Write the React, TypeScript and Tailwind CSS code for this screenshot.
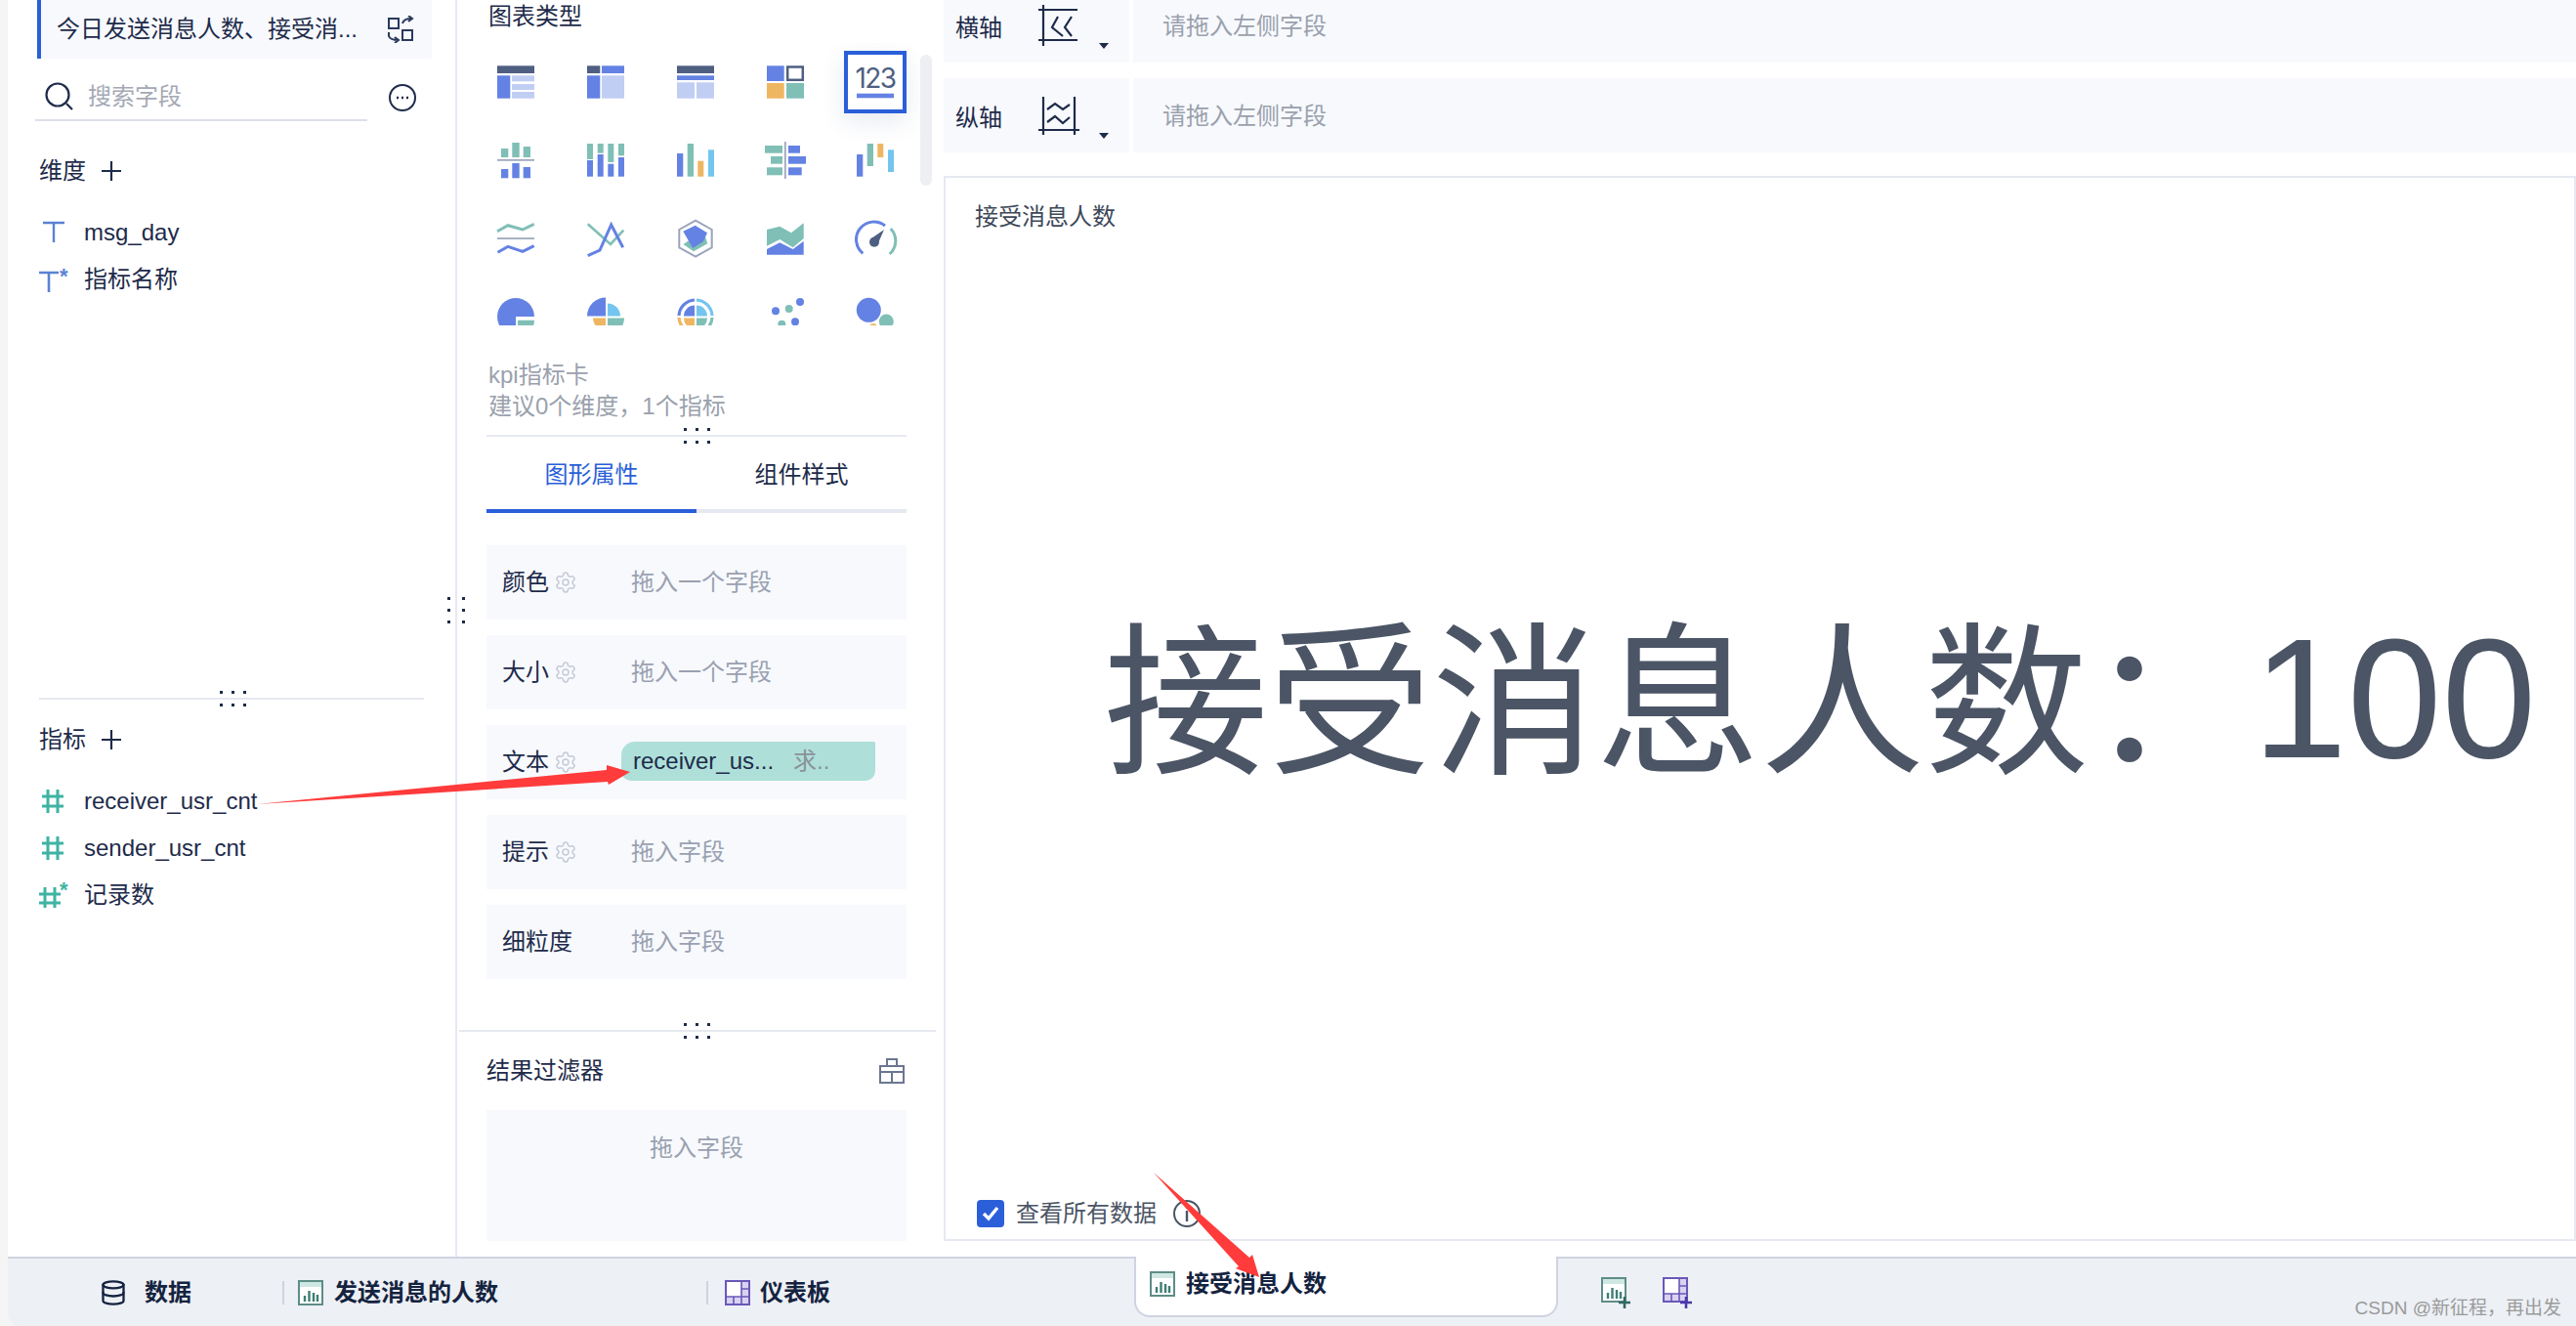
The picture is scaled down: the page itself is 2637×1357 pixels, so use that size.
import { Database, Settings } from "lucide-react";
import type { ReactNode } from "react";

const BLUE = "#6482e3";
const LIGHT = "#c1cef4";
const DARK = "#4f5f82";
const TEAL = "#7fbfb6";
const ORANGE = "#efb661";
const SKY = "#73c5ef";
const GRAY = "#9aa4ba";

// [x1, x2, y1, y2, fill]
type Box = [number, number, number, number, string];

const Bars = ({ list }: { list: Box[] }) => (
  <>
    {list.map(([x1, x2, y1, y2, c], i) => (
      <rect key={i} x={x1} y={y1} width={x2 - x1} height={y2 - y1} fill={c} />
    ))}
  </>
);

// quarter sectors: 0 upper left, 1 upper right, 2 lower right, 3 lower left
const sector = (cx: number, cy: number, r: number, a: number) => {
  const p = [
    [cx, cy - r, cx - r, cy],
    [cx + r, cy, cx, cy - r],
    [cx, cy + r, cx + r, cy],
    [cx - r, cy, cx, cy + r],
  ][a];
  return `M${cx} ${cy}L${p[2]} ${p[3]}A${r} ${r} 0 0 1 ${p[0]} ${p[1]}Z`;
};

const chartIcons: ReactNode[] = [
  <Bars list={[[1, 39, 3.3, 11, DARK], [1, 14.3, 13.3, 36.7, BLUE], [16, 39, 13.3, 19.3, LIGHT], [16, 39, 22, 28, LIGHT], [16, 39, 30, 36.7, LIGHT]]} />,
  <Bars list={[[1, 14.3, 3.3, 11, DARK], [16, 39, 3.3, 11, BLUE], [1, 14.3, 13.3, 36.7, BLUE], [16, 39, 13.3, 36.7, LIGHT]]} />,
  <Bars list={[[1, 39, 3.3, 11, DARK], [1, 39, 13.3, 18, BLUE], [1, 19, 20.3, 36.7, LIGHT], [21, 39, 20.3, 36.7, LIGHT]]} />,
  <>
    <Bars list={[[1, 18.7, 3.3, 19, BLUE], [1, 18.7, 21, 36.7, ORANGE], [21, 39, 21, 36.7, TEAL]]} />
    <rect x="22.2" y="4.5" width="15.6" height="13.3" fill="none" stroke={DARK} strokeWidth="2.5" />
  </>,
  <>
    <text x="20" y="26" textAnchor="middle" fontSize="28" fill={DARK} fontFamily="Inter, sans-serif" letterSpacing="-1.5">123</text>
    <rect x="1" y="31.7" width="38" height="4.6" fill={BLUE} />
  </>,
  <Bars list={[[1, 39, 19, 20.7, GRAY], [5, 12.3, 8, 17, TEAL], [16.3, 23.7, 2, 17, TEAL], [27.7, 35, 6, 17, TEAL], [5, 12.3, 29, 38.3, BLUE], [16.3, 23.7, 23, 38.3, BLUE], [27.7, 35, 27, 38.3, BLUE]]} />,
  <Bars list={[[1, 7, 3, 19, TEAL], [1, 7, 20, 36.7, BLUE], [11.7, 17.7, 3, 12.7, TEAL], [11.7, 17.7, 14, 36.7, BLUE], [22.3, 28.3, 3, 22, TEAL], [22.3, 28.3, 23.7, 36.7, BLUE], [33, 39, 3, 15.3, TEAL], [33, 39, 17, 36.7, BLUE]]} />,
  <Bars list={[[1, 7.3, 13, 36.7, BLUE], [11.7, 18, 3, 36.7, TEAL], [22.3, 28.3, 20.7, 36.7, ORANGE], [33, 39, 9.3, 36.7, SKY]]} />,
  <Bars list={[[19, 20.7, 1, 39, GRAY], [-1, 17, 5, 12.7, TEAL], [5, 17, 16, 23.7, TEAL], [1, 17, 27.3, 35.3, TEAL], [23, 35, 5, 12.7, BLUE], [23, 41, 16, 23.7, BLUE], [23, 36.7, 27.3, 35.3, BLUE]]} />,
  <Bars list={[[1, 7.3, 14, 36.7, BLUE], [11.7, 18, 3, 26, TEAL], [22.3, 28.3, 3, 17, ORANGE], [33, 39, 9.3, 32, SKY]]} />,
  <>
    <polyline points="1,12.7 12,6.7 27,11 38.7,5.3" fill="none" stroke={TEAL} strokeWidth="3" />
    <rect x="1" y="19.2" width="38" height="1.7" fill={GRAY} />
    <polyline points="1.5,34.3 12,28.3 27,33.3 38.7,27.7" fill="none" stroke={BLUE} strokeWidth="3" />
  </>,
  <>
    <polyline points="1.7,5.3 25,26 38.3,11.7" fill="none" stroke={TEAL} strokeWidth="2.6" />
    <polyline points="1.7,37.7 14,32 25.7,6 37.7,29.3" fill="none" stroke={BLUE} strokeWidth="3" />
  </>,
  <>
    <polygon points="20,1.7 36.7,11 36.7,29.3 20,38.7 3.3,29.3 3.3,11" fill="none" stroke={GRAY} strokeWidth="2" />
    <polygon points="7.5,26 18,33.3 32.3,25.3 28,12" fill={TEAL} />
    <polygon points="7.3,12.7 19.7,6.7 32,14.3 28,23 17.3,30" fill={BLUE} />
  </>,
  <>
    <polygon points="1,11 14.3,7.7 26,14.3 38.7,4.3 38.7,20 27.7,29.3 14.3,21 1,27.7" fill={TEAL} />
    <polygon points="1,31 14.3,24.3 27.7,31 38.7,22.7 38.7,36.7 1,36.7" fill={BLUE} />
  </>,
  <>
    <path d="M7.3 35.3A18 18 0 0 1 30 7" fill="none" stroke={BLUE} strokeWidth="3" />
    <path d="M35.7 10A18 18 0 0 1 34.7 36" fill="none" stroke={TEAL} strokeWidth="3" />
    <circle cx="19" cy="23.7" r="5" fill={DARK} />
    <polygon points="16,20 29,11 22,27" fill={DARK} />
  </>,
  <>
    <circle cx="20" cy="20" r="19" fill={BLUE} />
    <rect x="20" y="20" width="20" height="20" fill="#fff" />
    <path d={sector(22, 23.7, 17, 2)} fill={TEAL} />
  </>,
  <>
    <path d={sector(20, 19.5, 19, 0)} fill={BLUE} />
    <path d={sector(22, 19.5, 13, 1)} fill={SKY} />
    <path d={sector(20, 21.5, 13, 3)} fill={ORANGE} />
    <path d={sector(22, 21.5, 17, 2)} fill={TEAL} />
  </>,
  <>
    <path d="M3 19A17 17 0 0 1 19 3" fill="none" stroke={BLUE} strokeWidth="3.2" />
    <path d="M21 3A17 17 0 0 1 37 19" fill="none" stroke={SKY} strokeWidth="3.2" />
    <path d="M19 37A17 17 0 0 1 3 21" fill="none" stroke={ORANGE} strokeWidth="3.2" />
    <path d="M37 21A17 17 0 0 1 21 37" fill="none" stroke={TEAL} strokeWidth="3.2" />
    <path d={sector(19, 19.5, 11, 0)} fill={BLUE} />
    <path d={sector(21, 19.5, 11, 1)} fill={SKY} />
    <path d={sector(19, 21.5, 11, 3)} fill={ORANGE} />
    <path d={sector(21, 21.5, 11, 2)} fill={TEAL} />
  </>,
  <>
    <circle cx="10" cy="14.3" r="4" fill={BLUE} />
    <circle cx="23.7" cy="12" r="4" fill={TEAL} />
    <circle cx="35" cy="5" r="4" fill={BLUE} />
    <circle cx="30" cy="25.3" r="4" fill={BLUE} />
    <circle cx="16.3" cy="27.7" r="4" fill={TEAL} />
  </>,
  <>
    <circle cx="13.3" cy="13.3" r="12.5" fill={BLUE} />
    <circle cx="31.3" cy="25" r="7.5" fill={TEAL} />
    <circle cx="18" cy="31" r="4" fill={ORANGE} />
  </>,
];

const Grip = ({ className }: { className: string }) => (
  <div className={`absolute grid grid-cols-3 gap-x-[9px] gap-y-[10px] ${className}`}>
    {[0, 1, 2, 3, 4, 5].map((i) => (
      <span key={i} className="w-[3px] h-[3px] bg-[#1e2b4a]" />
    ))}
  </div>
);

const TextFieldIcon = ({ star }: { star?: boolean }) => (
  <svg width="32" height="30" viewBox="0 0 32 30" className="shrink-0">
    {star ? (
      <>
        <path d="M0 8H20M10 8V28" stroke="#5a82d4" strokeWidth="2.6" fill="none" />
        <text x="21" y="19" fontSize="22" fontWeight="700" fill="#5a82d4" fontFamily="Liberation Sans">*</text>
      </>
    ) : (
      <path d="M4 5H26M15 5V25" stroke="#5a82d4" strokeWidth="2.4" fill="none" />
    )}
  </svg>
);

const HashIcon = ({ star }: { star?: boolean }) => (
  <svg width="32" height="30" viewBox="0 0 32 30" className="shrink-0">
    {star ? (
      <>
        <path d="M6 7V28M16 7V28M0 14H22M0 23H22" stroke="#3fb3a3" strokeWidth="3" fill="none" />
        <text x="21" y="17" fontSize="22" fontWeight="700" fill="#3fb3a3" fontFamily="Liberation Sans">*</text>
      </>
    ) : (
      <path d="M9 3V27M19 3V27M3 10H25M3 20H25" stroke="#3fb3a3" strokeWidth="3" fill="none" />
    )}
  </svg>
);

const SideField = ({ icon, label }: { icon: ReactNode; label: string }) => (
  <div className="h-[48px] flex items-center pl-[32px] gap-[14px] text-[24px] text-[#1e2b4a]">
    <span className="w-[32px] flex">{icon}</span>
    <span>{label}</span>
  </div>
);

const GroupTitle = ({ label }: { label: string }) => (
  <div className="h-[32px] flex items-center pl-[32px] text-[24px] text-[#1e2b4a]">
    <span>{label}</span>
    <svg width="20" height="20" viewBox="0 0 20 20" className="ml-[16px]">
      <path d="M10 0V20M0 10H20" stroke="#1e2b4a" strokeWidth="2.2" />
    </svg>
  </div>
);

const PropRow = ({ label, gear, children }: { label: string; gear?: boolean; children: ReactNode }) => (
  <div className="h-[76px] bg-[#f7f9fd] flex items-center pl-[16px] text-[24px] text-[#1e2b4a]">
    <div className="w-[122px] flex items-center gap-[5px] shrink-0">
      <span>{label}</span>
      {gear && <Settings size={24} strokeWidth={1.5} color="#c6cad6" />}
    </div>
    {children}
  </div>
);

const Hint = ({ children }: { children: ReactNode }) => (
  <span className="ml-[10px] text-[#9aa1b0]">{children}</span>
);

const ChartTabIcon = ({ plus }: { plus?: boolean }) => (
  <svg width={plus ? 32 : 26} height={plus ? 32 : 26} viewBox={plus ? "0 0 32 32" : "0 0 26 26"} className="shrink-0">
    <rect x="1" y="1" width="24" height="24" fill="#fff" stroke="#5d8d87" strokeWidth="2" />
    <rect x="2" y="2" width="22" height="5" fill="#cfe7e2" />
    <path d="M7 22V16M11.5 22V11M16 22V13M20 22V15" stroke="#3f7e76" strokeWidth="2.4" />
    {plus && <path d="M24 20V32M18 26H30" stroke="#2e6a62" strokeWidth="2.6" />}
  </svg>
);

const BoardTabIcon = ({ plus }: { plus?: boolean }) => (
  <svg width={plus ? 32 : 26} height={plus ? 32 : 26} viewBox={plus ? "0 0 32 32" : "0 0 26 26"} className="shrink-0">
    <rect x="1" y="1" width="24" height="24" fill="#d9d2f1" stroke="#6a58b8" strokeWidth="2" />
    <rect x="2" y="2" width="15" height="15" fill="#fff" />
    <path d="M17 1V17M17 9H25M1 17H25M9 17V25M17 17V25" stroke="#6a58b8" strokeWidth="1.6" fill="none" />
    {plus && <path d="M24 20V32M18 26H30" stroke="#4a38a8" strokeWidth="2.6" />}
  </svg>
);

export default function App() {
  return (
    <div className="relative w-full h-[1357px] overflow-hidden pl-[8px] bg-[#f5f5f5] font-['Liberation_Sans','Noto_Sans_CJK_SC',sans-serif]">
      <div className="h-full bg-white flex flex-col rounded-bl-[12px] overflow-hidden">
        <div className="h-[1286px] flex">
          {/* left field list */}
          <div className="relative w-[460px] shrink-0 border-r-2 border-[#e6e9f0]">
            <div className="ml-[30px] w-[404px] h-[60px] bg-[#f7f9fd] border-l-4 border-[#2b5fd9] flex items-center pl-[16px] pr-[18px] justify-between">
              <span className="text-[24px] text-[#1e2b4a] whitespace-nowrap">今日发送消息人数、接受消...</span>
              <svg width="28" height="28" viewBox="0 0 28 28">
                <path d="M2 3H12V13H2ZM16 15H26V25H16Z" fill="none" stroke="#2a3a5c" strokeWidth="2" />
                <path d="M16 8C17 4 20 3 25 3M22 0L26 3L22 6M2 17V21C3 24 7 25 12 25M8 22L12 25L8 28" fill="none" stroke="#2a3a5c" strokeWidth="2" />
              </svg>
            </div>
            <div className="mt-[15px] flex items-start">
              <div className="ml-[28px] w-[340px] h-[49px] border-b-2 border-[#dcdfe8] flex items-center pl-[10px] gap-[16px] -mb-[1px]">
                <svg width="30" height="30" viewBox="0 0 30 30" className="shrink-0">
                  <circle cx="13" cy="13" r="11.5" fill="none" stroke="#1e2b4a" strokeWidth="2.2" />
                  <path d="M22 22L28 28" stroke="#1e2b4a" strokeWidth="2.2" />
                </svg>
                <span className="text-[24px] text-[#a4a9b5] -ml-[2px]">搜索字段</span>
              </div>
              <svg width="28" height="28" viewBox="0 0 28 28" className="ml-[22px] mt-[11px]">
                <circle cx="14" cy="14" r="13" fill="none" stroke="#1e2b4a" strokeWidth="2" />
                <path d="M8 14H10M13 14H15M18 14H20" stroke="#1e2b4a" strokeWidth="2.4" />
              </svg>
            </div>
            <div className="mt-[36px]">
              <GroupTitle label="维度" />
            </div>
            <div className="mt-[23px]">
              <SideField icon={<TextFieldIcon />} label="msg_day" />
              <SideField icon={<TextFieldIcon star />} label="指标名称" />
            </div>
            <div className="relative mt-[404px] mx-[32px] h-[2px] bg-[#e6e9f0] w-[394px]">
              <Grip className="left-[185px] -top-[7px]" />
            </div>
            <div className="mt-[25px]">
              <GroupTitle label="指标" />
            </div>
            <div className="mt-[23px]">
              <SideField icon={<HashIcon />} label="receiver_usr_cnt" />
              <SideField icon={<HashIcon />} label="sender_usr_cnt" />
              <SideField icon={<HashIcon star />} label="记录数" />
            </div>
            <div className="absolute -right-[10px] top-[611px] grid grid-cols-2 gap-x-[12px] gap-y-[9px] z-10">
              {[0, 1, 2, 3, 4, 5].map((i) => (
                <span key={i} className="w-[3px] h-[3px] bg-[#1e2b4a]" />
              ))}
            </div>
          </div>

          {/* chart settings */}
          <div className="w-[498px] shrink-0 flex flex-col">
            <div className="relative px-[30px]">
              <div className="h-[30px] text-[24px] leading-[33px] text-[#1e2b4a] ml-[2px]">图表类型</div>
              <div className="mt-[14px] -ml-[16px] w-[460px] h-[289px] overflow-hidden grid grid-cols-5 auto-rows-[80px]">
                {chartIcons.map((icon, i) => (
                  <div key={i} className="flex items-center justify-center">
                    <div className={i === 4 ? "w-[64px] h-[64px] border-4 border-[#2b5fd9] flex items-center justify-center shadow-[0_8px_24px_rgba(60,80,140,0.12)]" : "w-[64px] h-[64px] flex items-center justify-center"}>
                      <svg width="40" height="40" viewBox="0 0 40 40" overflow="visible">
                        {icon}
                      </svg>
                    </div>
                  </div>
                ))}
              </div>
              <div className="absolute left-[474px] top-[56px] w-[12px] h-[134px] rounded-full bg-[#eeeff3]" />
              <div className="ml-[2px] mt-[35px] text-[24px] leading-[32px] text-[#9aa1ad]">
                <div>kpi指标卡</div>
                <div>建议0个维度，1个指标</div>
              </div>
              <div className="relative mt-[13px] h-[2px] w-[430px] bg-[#e6e9f0]">
                <Grip className="left-[202px] -top-[7px]" />
              </div>
              <div className="w-[430px] flex text-[24px]">
                <div className="w-1/2 h-[78px] pt-[3px] flex items-center justify-center text-[#2b5fd9] border-b-4 border-[#2b5fd9]">图形属性</div>
                <div className="w-1/2 h-[78px] pt-[3px] flex items-center justify-center text-[#1e2b4a] border-b-4 border-[#e6e9f0]">组件样式</div>
              </div>
              <div className="w-[430px] mt-[33px] flex flex-col gap-[16px]">
                <PropRow label="颜色" gear>
                  <Hint>拖入一个字段</Hint>
                </PropRow>
                <PropRow label="大小" gear>
                  <Hint>拖入一个字段</Hint>
                </PropRow>
                <PropRow label="文本" gear>
                  <div className="w-[260px] h-[40px] -mt-[2px] bg-[#aee0d9] rounded-tl-[14px] rounded-tr-[2px] rounded-b-[10px] flex items-center pl-[12px] gap-[20px]">
                    <span>receiver_us...</span>
                    <span className="text-[#8a9199]">求..</span>
                  </div>
                </PropRow>
                <PropRow label="提示" gear>
                  <Hint>拖入字段</Hint>
                </PropRow>
                <PropRow label="细粒度">
                  <Hint>拖入字段</Hint>
                </PropRow>
              </div>
            </div>
            <div className="relative mt-[52px] ml-[2px] w-[488px] h-[2px] bg-[#e6e9f0]">
              <Grip className="left-[230px] -top-[7px]" />
            </div>
            <div className="px-[30px]">
              <div className="h-[80px] w-[430px] flex items-center justify-between text-[24px] text-[#1e2b4a]">
                <span>结果过滤器</span>
                <svg width="26" height="26" viewBox="0 0 26 26" className="mr-[2px]">
                  <path d="M1 8H25V25H1ZM8 8V1H18V8M13 14V25M1 14H25" fill="none" stroke="#6b7690" strokeWidth="2" />
                </svg>
              </div>
              <div className="w-[430px] h-[134px] bg-[#f7f9fd] pt-[22px] text-center text-[24px] leading-[34px] text-[#9aa1b0]">拖入字段</div>
            </div>
          </div>

          {/* axis rows and preview */}
          <div className="flex-1 min-w-0 flex flex-col pb-[16px]">
            <div className="h-[64px] flex gap-[4px]">
              <div className="w-[190px] bg-[#f7f9fd] flex text-[24px] text-[#1e2b4a] pl-[12px] pt-[13px] relative">
                <span className="leading-[32px]">横轴</span>
                <svg width="42" height="42" viewBox="0 0 42 42" className="absolute left-[97px] top-[5px]">
                  <path d="M0 5H40M0 36H40M5 0V42" stroke="#1e2b4a" strokeWidth="2.2" fill="none" />
                  <path d="M20 12L14 23L25 32M34 12L27 23L34 32" stroke="#1e2b4a" strokeWidth="2.2" fill="none" />
                </svg>
                <span className="absolute left-[159px] top-[44px] border-x-[5px] border-x-transparent border-t-[6px] border-t-[#1e2b4a]" />
              </div>
              <div className="flex-1 bg-[#f7f9fd] pl-[30px] pt-[11px] text-[24px] leading-[32px] text-[#9aa1ad]">请拖入左侧字段</div>
            </div>
            <div className="mt-[16px] h-[76px] flex gap-[4px]">
              <div className="w-[190px] bg-[#f7f9fd] flex text-[24px] text-[#1e2b4a] pl-[12px] pt-[25px] relative">
                <span className="leading-[32px]">纵轴</span>
                <svg width="44" height="42" viewBox="0 0 44 42" className="absolute left-[97px] top-[18px]">
                  <path d="M0 35H42M5 1V40M37 1V40" stroke="#1e2b4a" strokeWidth="2.2" fill="none" />
                  <path d="M9 14L17 8L25 14L32 9M9 27L17 21L25 28L32 22" stroke="#1e2b4a" strokeWidth="2.2" fill="none" />
                </svg>
                <span className="absolute left-[159px] top-[56px] border-x-[5px] border-x-transparent border-t-[6px] border-t-[#1e2b4a]" />
              </div>
              <div className="flex-1 bg-[#f7f9fd] pl-[30px] pt-[23px] text-[24px] leading-[32px] text-[#9aa1ad]">请拖入左侧字段</div>
            </div>
            <div className="mt-[24px] flex-1 border-2 border-[#e6e9f0] flex flex-col min-h-0">
              <div className="pl-[30px] pt-[23px] text-[24px] leading-[34px] text-[#3d4858]">接受消息人数</div>
              <div className="flex-1 flex items-center pl-[162px] pb-[22px] text-[#4b5565]">
                <div className="text-[168px] leading-none whitespace-nowrap">
                  接受消息人数：<span className="text-[174px] align-[4px]">100</span>
                </div>
              </div>
              <div className="h-[52px] flex items-center pl-[32px] text-[24px] text-[#4b5565]">
                <span className="w-[28px] h-[28px] rounded-[4px] bg-[#2b5fd9] flex items-center justify-center">
                  <svg width="20" height="20" viewBox="0 0 20 20">
                    <path d="M3 10L8 15L17 4" fill="none" stroke="#fff" strokeWidth="3.4" />
                  </svg>
                </span>
                <span className="ml-[12px]">查看所有数据</span>
                <svg width="28" height="28" viewBox="0 0 28 28" className="ml-[17px]">
                  <circle cx="14" cy="14" r="13" fill="none" stroke="#4b5565" strokeWidth="2" />
                  <path d="M14 11V22M14 6V8.5" stroke="#4b5565" strokeWidth="2.4" />
                </svg>
              </div>
            </div>
          </div>
        </div>

        {/* sheet tabs */}
        <div className="flex-1 bg-[#edf0f5] border-t-2 border-[#d0d3e0] flex items-center text-[24px] font-bold text-[#14233f]">
          <Database size={28} strokeWidth={2} color="#14233f" className="ml-[94px] shrink-0" />
          <span className="ml-[18px]">数据</span>
          <span className="ml-[93px] w-[2px] h-[24px] bg-[#d0d3dc]" />
          <span className="ml-[14px] flex">
            <ChartTabIcon />
          </span>
          <span className="ml-[11px]">发送消息的人数</span>
          <span className="ml-[213px] w-[2px] h-[24px] bg-[#d0d3dc]" />
          <span className="ml-[17px] flex">
            <BoardTabIcon />
          </span>
          <span className="ml-[10px]">仪表板</span>
          <div className="ml-[311px] self-start -mt-[2px] w-[434px] h-[62px] bg-white border-x-2 border-b-2 border-[#d0d3e0] rounded-b-[16px] flex items-center pl-[14px] pb-[4px]">
            <ChartTabIcon />
            <span className="ml-[11px]">接受消息人数</span>
          </div>
          <span className="ml-[44px] flex">
            <ChartTabIcon plus />
          </span>
          <span className="ml-[31px] flex">
            <BoardTabIcon plus />
          </span>
          <span className="ml-auto mr-[15px] mt-[34px] text-[19px] font-normal text-[#9a9a9a] whitespace-nowrap">CSDN @新征程，再出发</span>
        </div>
      </div>

      {/* red annotation arrows on top of the screenshot */}
      <svg width="2637" height="1357" viewBox="0 0 2637 1357" className="absolute left-0 top-0 pointer-events-none">
        <polygon points="263,823 621,788 621,783 645,790 623,803 622,800" fill="#ff3b3b" />
        <polygon points="1181,1200 1279,1287 1282,1284 1289,1307 1265,1298 1268,1296" fill="#ff3b3b" />
      </svg>
    </div>
  );
}
